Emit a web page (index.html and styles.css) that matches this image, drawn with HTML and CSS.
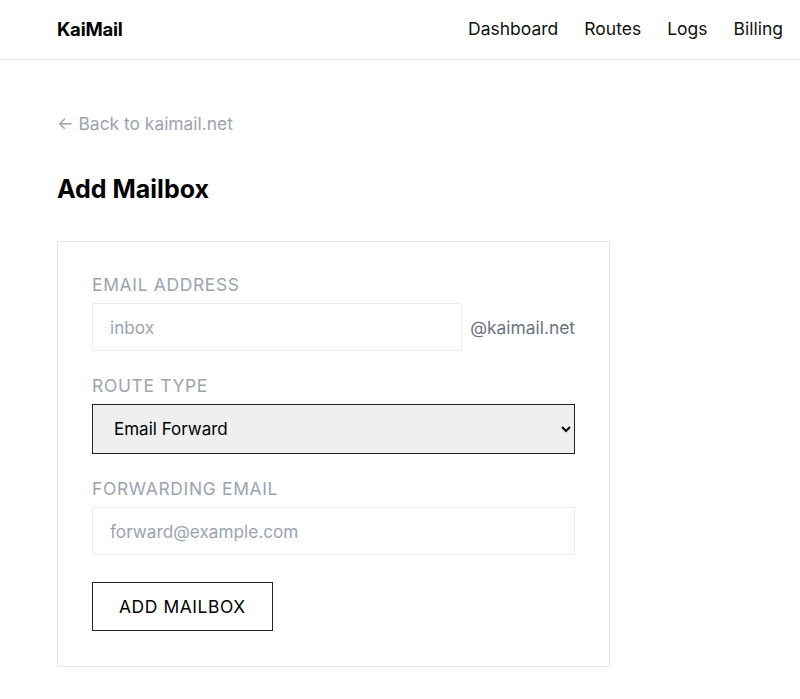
FILE: index.html
```html
<!DOCTYPE html>
<html lang="en">
<head>
<meta charset="utf-8">
<title>Add Mailbox - KaiMail</title>
<link rel="stylesheet" href="styles.css">
</head>
<body>
<header class="site-header">
  <a class="logo" href="#">KaiMail</a>
  <nav class="nav">
    <a href="#">Dashboard</a>
    <a href="#">Routes</a>
    <a href="#">Logs</a>
    <a href="#">Billing</a>
  </nav>
</header>
<main class="main">
  <a class="back" href="#">← Back to kaimail.net</a>
  <h1 class="title">Add Mailbox</h1>
  <form class="card">
    <div class="field">
      <label class="label" for="addr">Email Address</label>
      <div class="addr-row">
        <input class="input" id="addr" type="text" placeholder="inbox">
        <span class="suffix">@kaimail.net</span>
      </div>
    </div>
    <div class="field">
      <label class="label" for="type">Route Type</label>
      <select class="select" id="type">
        <option>Email Forward</option>
        <option>Webhook</option>
      </select>
    </div>
    <div class="field">
      <label class="label" for="fwd">Forwarding Email</label>
      <input class="input" id="fwd" type="email" placeholder="forward@example.com">
    </div>
    <button class="btn" type="button">Add Mailbox</button>
  </form>
</main>
</body>
</html>
```
FILE: styles.css
```css
* { box-sizing: border-box; }
html, body { margin: 0; padding: 0; background: #fff; }
body {
  font-family: Inter, "Liberation Sans", sans-serif;
  color: #111;
  font-size: 17.4px;
}
a { text-decoration: none; color: inherit; }

.site-header {
  height: 60px;
  border-bottom: 1px solid #e8e8e8;
  display: flex;
  align-items: center;
  justify-content: space-between;
  padding: 0 17px 2px 57px;
}
.logo {
  font-weight: 700;
  font-size: 18.5px;
  color: #000;
  letter-spacing: -0.2px;
}
.nav { display: flex; gap: 26px; }
.nav a { font-size: 17.5px; color: #111; }

.main { padding: 52px 57px 40px; }
.back {
  display: inline-block;
  color: #9ca3af;
  font-size: 17.4px;
  line-height: 24px;
}
.title {
  margin: 37px 0 0;
  font-size: 25px;
  line-height: 32px;
  font-weight: 700;
  color: #000;
}
.card {
  margin-top: 36px;
  width: 553px;
  border: 1px solid #e6e6e6;
  padding: 31px 34px 35px;
}
.field { margin-bottom: 23px; }
.label {
  display: block;
  font-size: 17.4px;
  line-height: 24px;
  text-transform: uppercase;
  letter-spacing: 0.7px;
  color: #9ca3af;
  margin-bottom: 6px;
}
.addr-row { display: flex; align-items: center; gap: 8px; }
.addr-row .input { flex: 1; width: auto; min-width: 0; }
.suffix { color: #6b7280; font-size: 17.4px; }
.input {
  display: block;
  width: 100%;
  height: 48px;
  border: 1px solid #ececec;
  padding: 0 17px;
  font-family: inherit;
  font-size: 17.2px;
  color: #111;
  outline: none;
  background: #fff;
}
.input::placeholder { color: #9ca3af; }
.select {
  display: block;
  width: 100%;
  height: 50px;
  border: 1px solid #222;
  border-radius: 0;
  background-color: #efefef;
  padding: 0 17px;
  font-family: inherit;
  font-size: 17px;
  color: #000;
}
.btn {
  margin-top: 4px;
  height: 49px;
  padding: 0 26px;
  border: 1px solid #222;
  background: #fff;
  font-family: inherit;
  font-size: 17.4px;
  letter-spacing: 0.6px;
  text-transform: uppercase;
  color: #000;
}
```
